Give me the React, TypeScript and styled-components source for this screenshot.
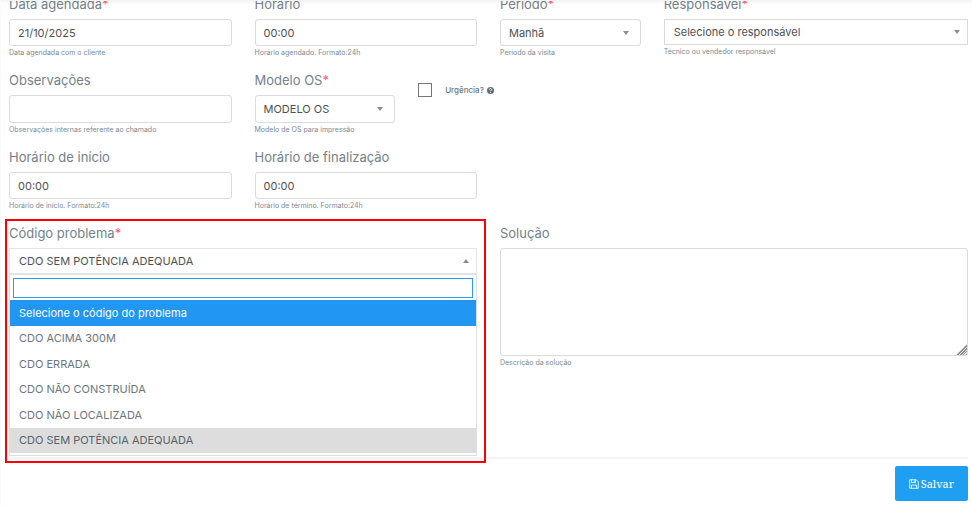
import React from "react";
import styled, { createGlobalStyle, css } from "styled-components";

const GlobalStyle = createGlobalStyle`
  *, *::before, *::after { box-sizing: border-box; }
  body {
    margin: 0;
    background: #fff;
    color: #6b7780;
    font-family: Inter, "Open Sans", sans-serif;
    font-size: 11px;
  }
  button, input, select, textarea { font: inherit; }
`;

const Page = styled.div`
  position: relative;
  overflow: hidden;
  border-left: 1px solid #fafafa;
`;

const HeaderShade = styled.div`
  position: absolute;
  top: 0;
  left: 0;
  right: 0;
  height: 1px;
  background: #f3f3f4;
  box-shadow: 0 1px 3px rgba(0, 0, 0, 0.12);
`;

const Form = styled.form`
  margin-top: -7px;
  padding: 0 4px 5px 8px;
`;

const Grid = styled.div`
  display: grid;
  grid-template-columns: repeat(12, minmax(0, 1fr));
  column-gap: 23px;
  row-gap: 9px;
`;

const Field = styled.div<{ $span: number; $start?: number }>`
  grid-column: ${(p) => (p.$start ? `${p.$start} / ` : "")}span ${(p) => p.$span};
  display: flex;
  flex-direction: column;
  position: relative;
`;

const Label = styled.label`
  display: block;
  margin-bottom: 4px;
  font-size: 13px;
  line-height: 22px;
  color: #74818a;
  white-space: nowrap;
`;

const Required = styled.span`
  color: #ff5b70;
`;

const Help = styled.small`
  font-size: 7px;
  line-height: 14px;
  color: #7d8991;
  white-space: nowrap;
`;

const control = css<{ $tall?: boolean }>`
  width: 100%;
  height: ${(p) => (p.$tall ? 28 : 27)}px;
  padding: 0 8px;
  border: 1px solid #d9dae3;
  border-radius: 3px;
  background: #fff;
  color: #4e5154;
  outline: none;
`;

const TextInput = styled.input<{ $tall?: boolean }>`
  ${control}
`;

const SelectWrap = styled.div`
  display: grid;
  align-items: center;
  > * { grid-area: 1 / 1; }
`;

const Select = styled.select<{ $tall?: boolean; $square?: boolean }>`
  ${control}
  appearance: none;
  ${(p) =>
    p.$square &&
    css`
      height: 26px;
      padding: 0 9px;
      border-radius: 0;
    `}
`;

const Arrow = styled.svg<{ $edge: number }>`
  justify-self: end;
  margin-right: ${(p) => p.$edge}px;
  pointer-events: none;
  fill: #8a8d90;
`;

const Urgency = styled.div`
  grid-column: span 2;
  display: flex;
  align-items: center;
  gap: 13px;
  height: 42px;
`;

const Checkbox = styled.input`
  appearance: none;
  width: 14px;
  height: 14px;
  margin: 0;
  border: 1px solid #767676;
  background: #fff;
`;

const UrgencyLabel = styled.label`
  display: flex;
  align-items: center;
  gap: 3px;
  font-size: 8px;
  font-weight: 500;
  color: #6b7780;
`;

const ProblemField = styled(Field)`
  &::after {
    content: "";
    position: absolute;
    inset: -3px -9px -7px -4px;
    border: 2px solid #f00;
    pointer-events: none;
    z-index: 1;
  }
`;

const Combo = styled.button`
  display: flex;
  align-items: center;
  justify-content: space-between;
  width: 100%;
  height: 27px;
  padding: 0 0 0 9px;
  border: 1px solid #e3e3ea;
  border-bottom-width: 2px;
  background: #fff;
  color: #4e5154;
  text-align: left;
`;

const Dropdown = styled.div`
  border: 1px solid #dddde5;
  border-top: 0;
`;

const Search = styled.input`
  display: block;
  width: calc(100% - 6px);
  height: 20px;
  margin: 3px 3px 2px;
  padding: 0 4px;
  border: 1px solid #2c9bee;
  outline: none;
`;

const Options = styled.ul`
  display: grid;
  grid-auto-rows: 1fr;
  min-height: 153px;
  margin: 0 0 2px;
  padding: 0;
  list-style: none;
`;

const Option = styled.li<{ $state?: "active" | "selected" }>`
  display: flex;
  align-items: center;
  padding: 0 9px;
  color: ${(p) => (p.$state === "active" ? "#fff" : p.$state === "selected" ? "#55626b" : "#6b7780")};
  background: ${(p) => (p.$state === "active" ? "#2196f3" : p.$state === "selected" ? "#ddd" : "#fff")};
`;

const Solution = styled.textarea`
  ${control}
  display: block;
  height: 108px;
  padding: 6px 8px;
  resize: vertical;

  &::-webkit-resizer {
    background:
      linear-gradient(135deg, #fff 60%, transparent 60%),
      repeating-linear-gradient(135deg, #8c8c8c 0 1px, #e6e6e6 1px 2px);
  }
`;

const Footer = styled.footer`
  display: flex;
  justify-content: flex-end;
  margin-top: 1px;
  padding-top: 7px;
  border-top: 2px solid #f4f4f5;
`;

const Save = styled.button`
  display: flex;
  align-items: center;
  justify-content: center;
  gap: 2px;
  height: 35px;
  padding: 0 14px;
  border: 0;
  border-radius: 2px;
  background: #1e9ff2;
  color: #fff;
  font-family: "Noto Serif", "Liberation Serif", serif;
  font-size: 11px;
`;

const Triangle = ({ edge, up }: { edge: number; up?: boolean }) => (
  <Arrow $edge={edge} width="6" height="4" viewBox="0 0 6 4" aria-hidden="true">
    <path d={up ? "M0 4L3 0L6 4Z" : "M0 0H6L3 4Z"} />
  </Arrow>
);

type FieldProps = {
  id: string;
  label: string;
  span: number;
  start?: number;
  help: string;
  required?: boolean;
  tall?: boolean;
};

const Caption = ({ id, label, required }: { id: string; label: string; required?: boolean }) => (
  <Label htmlFor={id}>
    {label}
    {required && <Required>*</Required>}
  </Label>
);

const TextField = ({ id, label, span, start, help, required, tall, value = "" }: FieldProps & { value?: string }) => (
  <Field $span={span} $start={start}>
    <Caption id={id} label={label} required={required} />
    <TextInput id={id} $tall={tall} defaultValue={value} />
    <Help>{help}</Help>
  </Field>
);

const SelectField = ({
  id, label, span, start, help, required, tall, value, square,
}: FieldProps & { value: string; square?: boolean }) => (
  <Field $span={span} $start={start}>
    <Caption id={id} label={label} required={required} />
    <SelectWrap>
      <Select id={id} $tall={tall} $square={square}>
        <option>{value}</option>
      </Select>
      <Triangle edge={square ? 8 : 12} />
    </SelectWrap>
    <Help>{help}</Help>
  </Field>
);

const problems = [
  "Selecione o código do problema",
  "CDO ACIMA 300M",
  "CDO ERRADA",
  "CDO NÃO CONSTRUÍDA",
  "CDO NÃO LOCALIZADA",
  "CDO SEM POTÊNCIA ADEQUADA",
];

export default function App() {
  return (
    <Page>
      <GlobalStyle />
      <Form onSubmit={(e) => e.preventDefault()}>
        <Grid>
          <TextField id="date" label="Data agendada" required span={3} value="21/10/2025" help="Data agendada com o cliente" />
          <TextField id="time" label="Horário" span={3} value="00:00" help="Horário agendado. Formato:24h" />
          <SelectField id="period" label="Período" required span={2} value="Manhã" help="Período da visita" />
          <SelectField id="owner" label="Responsável" required span={4} square value="Selecione o responsável" help="Técnico ou vendedor responsável" />

          <TextField id="notes" label="Observações" span={3} tall help="Observações internas referente ao chamado" />
          <SelectField id="model" label="Modelo OS" required span={2} tall value="MODELO OS" help="Modelo de OS para impressão" />
          <Urgency>
            <Checkbox id="urgent" type="checkbox" />
            <UrgencyLabel htmlFor="urgent">
              Urgência?
              <svg width="7" height="7" viewBox="0 0 14 14" aria-hidden="true">
                <circle cx="7" cy="7" r="7" fill="#5f6c75" />
                <path d="M4.6 5.4C4.6 2.3 9.5 2.4 9.4 5.2C9.3 6.7 7.1 6.7 7.1 8.4M7.1 9.8V11.6" fill="none" stroke="#fff" strokeWidth="1.9" />
              </svg>
            </UrgencyLabel>
          </Urgency>

          <TextField id="begin" label="Horário de início" span={3} start={1} value="00:00" help="Horário de início. Formato:24h" />
          <TextField id="end" label="Horário de finalização" span={3} value="00:00" help="Horário de término. Formato:24h" />

          <ProblemField $span={6} $start={1}>
            <Caption id="problem" label="Código problema" required />
            <Combo id="problem" type="button" aria-haspopup="listbox" aria-expanded="true" aria-controls="problem-list">
              CDO SEM POTÊNCIA ADEQUADA
              <Triangle edge={7} up />
            </Combo>
            <Dropdown>
              <Search type="search" aria-label="Buscar código do problema" />
              <Options id="problem-list" role="listbox">
                {problems.map((name, i) => (
                  <Option
                    key={name}
                    role="option"
                    aria-selected={i === 5}
                    $state={i === 0 ? "active" : i === 5 ? "selected" : undefined}
                  >
                    {name}
                  </Option>
                ))}
              </Options>
            </Dropdown>
          </ProblemField>

          <Field $span={6}>
            <Caption id="solution" label="Solução" />
            <Solution id="solution" />
            <Help>Descrição da solução</Help>
          </Field>
        </Grid>
        <Footer>
          <Save type="submit">
            <svg width="10" height="10" viewBox="0 0 14 14" fill="none" stroke="#fff" strokeWidth="1.2" aria-hidden="true">
              <path d="M1 1H10L13 4V13H1Z M3.5 13V8.5H10.5V13 M3.5 1V5H9V1 M7.2 2V4" />
            </svg>
            Salvar
          </Save>
        </Footer>
      </Form>
      <HeaderShade />
    </Page>
  );
}
